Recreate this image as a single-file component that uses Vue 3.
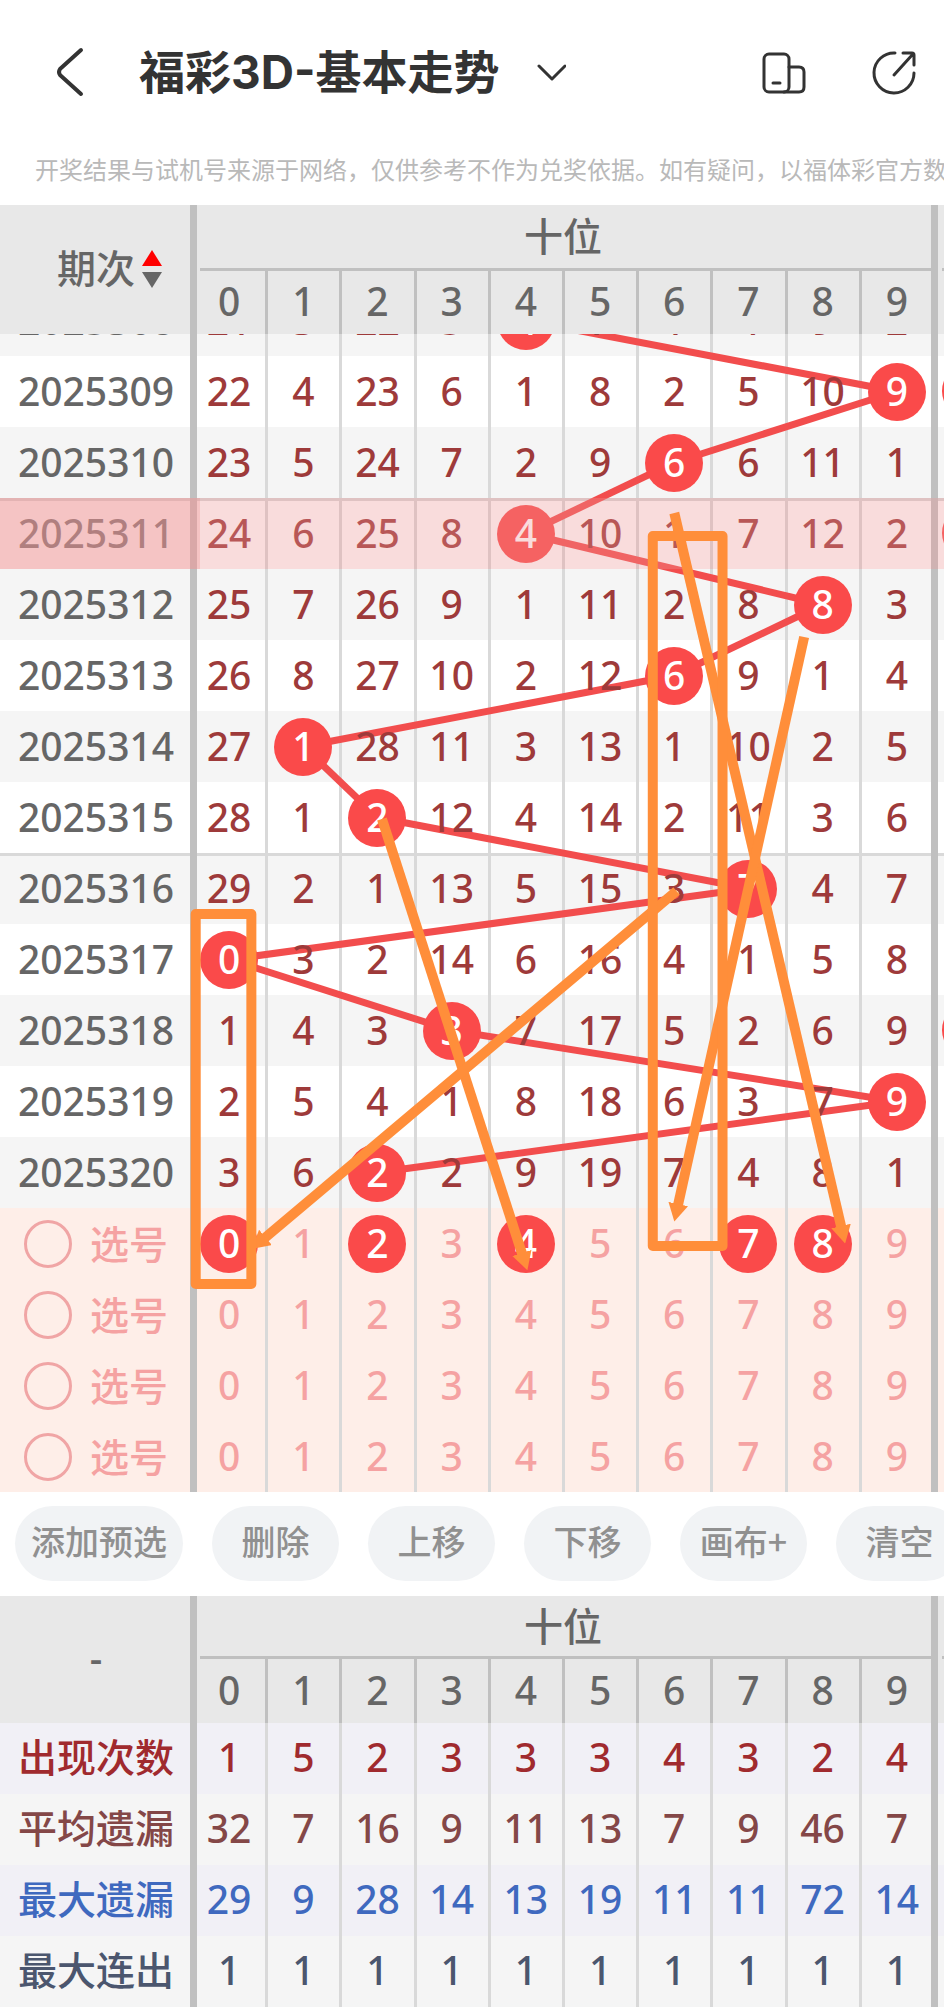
<script setup>
import { ref } from 'vue'

const digits = [0, 1, 2, 3, 4, 5, 6, 7, 8, 9]
const ROW = 71

// hit: drawn digit of the tens place; cells: omission counts per digit
const draws = [
  { id: '2025308', hit: 4, cells: [21, 3, 22, 5, 4, 7, 1, 4, 9, 2] },
  { id: '2025309', hit: 9, cells: [22, 4, 23, 6, 1, 8, 2, 5, 10, 9], next: true },
  { id: '2025310', hit: 6, cells: [23, 5, 24, 7, 2, 9, 6, 6, 11, 1] },
  { id: '2025311', hit: 4, cells: [24, 6, 25, 8, 4, 10, 1, 7, 12, 2], next: true, ruled: true },
  { id: '2025312', hit: 8, cells: [25, 7, 26, 9, 1, 11, 2, 8, 8, 3] },
  { id: '2025313', hit: 6, cells: [26, 8, 27, 10, 2, 12, 6, 9, 1, 4] },
  { id: '2025314', hit: 1, cells: [27, 1, 28, 11, 3, 13, 1, 10, 2, 5] },
  { id: '2025315', hit: 2, cells: [28, 1, 2, 12, 4, 14, 2, 11, 3, 6] },
  { id: '2025316', hit: 7, cells: [29, 2, 1, 13, 5, 15, 3, 7, 4, 7], ruled: true },
  { id: '2025317', hit: 0, cells: [0, 3, 2, 14, 6, 16, 4, 1, 5, 8] },
  { id: '2025318', hit: 3, cells: [1, 4, 3, 3, 7, 17, 5, 2, 6, 9], next: true },
  { id: '2025319', hit: 9, cells: [2, 5, 4, 1, 8, 18, 6, 3, 7, 9] },
  { id: '2025320', hit: 2, cells: [3, 6, 2, 2, 9, 19, 7, 4, 8, 1] }
]
const activeRow = 3

const picks = ref([[0, 2, 4, 7, 8], [], [], []])
const chosen = ref(null)
function toggle(row, d) {
  const list = picks.value[row]
  const at = list.indexOf(d)
  if (at < 0) list.push(d)
  else list.splice(at, 1)
}

const trend = draws.slice(1).map((d, i) => ({
  x1: draws[i].hit * 10 + 5 + '%',
  y1: (i + 0.5) * ROW,
  x2: d.hit * 10 + 5 + '%',
  y2: (i + 1.5) * ROW
}))

const arrows = [
  { x1: '65%', y1: 228, x2: '87.5%', y2: 942 },
  { x1: '82.5%', y1: 352, x2: '65.5%', y2: 920 },
  { x1: '25.6%', y1: 534, x2: '44.5%', y2: 969 },
  { x1: '65.3%', y1: 606, x2: '9.8%', y2: 953 }
]
const frames = [
  { x: '0.5%', y: 629, width: '7.5%', height: 370 },
  { x: '62.1%', y: 251, width: '9.4%', height: 710 }
]

const tools = ['添加预选', '删除', '上移', '下移', '画布+', '清空']

const stats = [
  { name: '出现次数', tone: 'crimson', cells: [1, 5, 2, 3, 3, 3, 4, 3, 2, 4] },
  { name: '平均遗漏', tone: 'brown', cells: [32, 7, 16, 9, 11, 13, 7, 9, 46, 7] },
  { name: '最大遗漏', tone: 'blue', cells: [29, 9, 28, 14, 13, 19, 11, 11, 72, 14] },
  { name: '最大连出', tone: 'slate', cells: [1, 1, 1, 1, 1, 1, 1, 1, 1, 1] }
]
</script>

<template>
  <main class="page">
    <header class="top">
      <button class="icon back" aria-label="返回">
        <svg width="30" height="50" viewBox="0 0 30 50"><path d="M26 3 L5 22 Q3 25 5 28 L26 47" /></svg>
      </button>
      <h1>福彩3D-基本走势</h1>
      <button class="icon more" aria-label="切换走势">
        <svg width="30" height="18" viewBox="0 0 30 18"><path d="M3 3 L16 16 L29 3" /></svg>
      </button>
      <span class="spacer"></span>
      <button class="icon" aria-label="横屏">
        <svg width="46" height="46" viewBox="0 0 46 46">
          <rect x="3" y="5" width="25" height="38" rx="5" />
          <path d="M28 18 H38 Q43 18 43 23 V38 Q43 43 38 43 H23" />
          <path d="M12 34 H19" />
        </svg>
      </button>
      <button class="icon share" aria-label="分享">
        <svg width="46" height="46" viewBox="0 0 46 46">
          <path d="M23 4 A20 20 0 1 0 42 24" />
          <path d="M31 4 H40 Q42 4 42 6 V16 M41 5 L22 26" />
        </svg>
      </button>
    </header>
    <p class="notice">开奖结果与试机号来源于网络，仅供参考不作为兑奖依据。如有疑问，以福体彩官方数</p>

    <table class="grid head">
      <colgroup><col class="c-label" /><col v-for="d in digits" :key="d" /><col class="c-next" /></colgroup>
      <thead>
        <tr class="group">
          <th rowspan="2" scope="col">
            <button class="sort">期次
              <svg width="20" height="40" viewBox="0 0 20 40" aria-hidden="true">
                <path fill="#ff0000" d="M10 1 L20 17 H0 Z" /><path fill="#666666" d="M0 23 H20 L10 39 Z" />
              </svg>
            </button>
          </th>
          <th class="wide" colspan="10" scope="colgroup">十位</th>
          <th class="wide next"></th>
        </tr>
        <tr class="nums">
          <th v-for="d in digits" :key="d" class="cell" scope="col">{{ d }}</th>
          <th class="cell next"></th>
        </tr>
      </thead>
    </table>

    <section class="viewport">
      <div class="sheet">
        <table class="grid">
          <colgroup><col class="c-label" /><col v-for="d in digits" :key="d" /><col class="c-next" /></colgroup>
          <tbody>
            <tr v-for="row in draws" :key="row.id" class="draw" :class="{ ruled: row.ruled }">
              <th scope="row"><span class="num">{{ row.id }}</span></th>
              <td v-for="(n, d) in row.cells" :key="d" class="cell">
                <span class="num" :class="{ ball: d === row.hit }">{{ n }}</span>
              </td>
              <td class="cell next"><span v-if="row.next" class="ball peek"></span></td>
            </tr>
            <tr v-for="(list, r) in picks" :key="r" class="pick">
              <th scope="row">
                <label class="choose"><input v-model="chosen" type="radio" name="pick" :value="r" />选号</label>
              </th>
              <td v-for="d in digits" :key="d" class="cell">
                <button class="num" :class="{ ball: list.includes(d) }" @click="toggle(r, d)">{{ d }}</button>
              </td>
              <td class="cell next"></td>
            </tr>
          </tbody>
        </table>
        <svg class="layer trend" aria-hidden="true">
          <line v-for="(l, i) in trend" :key="i" v-bind="l" />
        </svg>
        <div class="shade" :style="{ top: activeRow * ROW + 'px' }"><i></i></div>
        <svg class="layer marks" aria-hidden="true">
          <defs>
            <marker id="tip" markerUnits="userSpaceOnUse" markerWidth="18" markerHeight="20" refX="1" refY="10" orient="auto">
              <path d="M0 0 L18 10 L0 20 Z" />
            </marker>
          </defs>
          <line v-for="(a, i) in arrows" :key="i" v-bind="a" marker-end="url(#tip)" />
          <rect v-for="(f, i) in frames" :key="i" v-bind="f" />
        </svg>
      </div>
    </section>

    <nav class="tools">
      <button v-for="t in tools" :key="t">{{ t }}</button>
    </nav>

    <table class="grid foot">
      <colgroup><col class="c-label" /><col v-for="d in digits" :key="d" /><col class="c-next" /></colgroup>
      <thead>
        <tr class="group">
          <th rowspan="2" scope="col">-</th>
          <th class="wide" colspan="10" scope="colgroup">十位</th>
          <th class="wide next"></th>
        </tr>
        <tr class="nums">
          <th v-for="d in digits" :key="d" class="cell" scope="col">{{ d }}</th>
          <th class="cell next"></th>
        </tr>
      </thead>
      <tbody>
        <tr v-for="s in stats" :key="s.name" class="stat" :class="s.tone">
          <th scope="row">{{ s.name }}</th>
          <td v-for="(n, d) in s.cells" :key="d" class="cell">{{ n }}</td>
          <td class="cell next"></td>
        </tr>
      </tbody>
    </table>
  </main>
</template>

<style>
body {
  margin: 0;
  background: #ffffff;
}
</style>

<style scoped>
.page {
  display: flex;
  flex-direction: column;
  height: 100vh;
  overflow: hidden;
  background: #ffffff;
  color: #666666;
  font-family: "Noto Sans", "Noto Sans CJK SC", sans-serif;
}
button {
  margin: 0;
  padding: 0;
  border: 0;
  background: none;
  color: inherit;
  font: inherit;
  cursor: pointer;
}
.top {
  display: flex;
  flex: none;
  align-items: center;
  height: 144px;
  padding: 0 26px 0 55px;
  color: #333333;
}
.top h1 {
  margin: 0 37px 0 54px;
  font: 700 46px/64px "Inter", "Noto Sans CJK SC", sans-serif;
  white-space: nowrap;
}
.icon svg {
  display: block;
  fill: none;
  stroke: #333333;
  stroke-width: 3;
  stroke-linecap: round;
  stroke-linejoin: round;
}
.back svg {
  stroke-width: 4;
}
.spacer {
  flex: 1;
}
.share {
  margin-left: 65px;
}
.notice {
  flex: none;
  height: 61px;
  margin: 0;
  padding-left: 35px;
  overflow: hidden;
  color: #b9b9b9;
  font: 24px/50px "Noto Sans CJK SC", sans-serif;
  white-space: nowrap;
}
.grid {
  width: 100%;
  flex: none;
  border-spacing: 0;
  table-layout: fixed;
  font-size: 39px;
  line-height: 60px;
  text-align: center;
}
.c-label {
  width: 192px;
}
.c-next {
  width: 10px;
}
.grid th,
.grid td {
  box-sizing: border-box;
  height: 71px;
  padding: 0 0 3px;
  font-weight: 500;
  white-space: nowrap;
}
.cell,
.wide {
  position: relative;
}
.cell::before,
.wide::before {
  content: "";
  position: absolute;
  top: 0;
  bottom: 0;
  left: -1px;
  width: 3px;
  background: #d9d9d9;
}
thead .cell::before {
  background: #c0c0c0;
}
th + .cell:not(.nums .cell)::before,
.nums .cell:first-child::before,
.next::before,
.wide::before {
  left: -2px;
  width: 7px;
  background: #c0c0c0;
}
.grid .next::before {
  left: -3px;
  background: #c0c0c0;
}
thead {
  background: #e8e8e8;
}
.wide::after {
  content: "";
  position: absolute;
  right: 0;
  bottom: 0;
  left: 8px;
  height: 3px;
  background: #c0c0c0;
}
.grid .wide {
  height: 66px;
  padding-bottom: 5px;
}
.grid .nums .cell {
  height: 63px;
}
.grid.foot .wide {
  height: 63px;
  padding-bottom: 3px;
}
.grid.foot .nums .cell {
  height: 64px;
}
.sort {
  position: relative;
}
.sort svg {
  position: absolute;
  top: 11px;
  left: 100%;
  margin-left: 7px;
}
.viewport {
  display: flex;
  flex: 1;
  flex-direction: column;
  justify-content: flex-end;
  min-height: 0;
  overflow: hidden;
}
.sheet {
  position: relative;
  flex: none;
}
.draw:nth-child(odd) {
  background: #f5f5f5;
}
.ruled > * {
  box-shadow: inset 0 3px #d9d9d9;
}
.draw .cell {
  color: #9e3a3a;
}
.grid .draw > *,
.grid .pick > * {
  padding-bottom: 0;
}
.num {
  position: relative;
  z-index: 2;
  display: block;
  box-sizing: border-box;
  width: 58px;
  height: 58px;
  margin: 0 auto;
  border-radius: 50%;
  line-height: 56px;
}
button.num {
  padding-bottom: 2px;
}
th .num {
  width: auto;
}
.cell .ball {
  background: #fa4a4a;
  color: #ffffff;
}
.peek {
  position: absolute;
  top: 6px;
  left: 8px;
  width: 58px;
  height: 58px;
  border-radius: 50%;
}
.pick {
  background: #feeee8;
  color: #f5a2a2;
}
.choose {
  display: flex;
  align-items: center;
  gap: 18px;
  padding-left: 24px;
  line-height: 56px;
}
.choose input {
  appearance: none;
  box-sizing: border-box;
  width: 48px;
  height: 48px;
  margin: 0;
  border: 3px solid #f0a5a5;
  border-radius: 50%;
}
.choose input:checked {
  background: #fa4a4a;
}
.layer {
  position: absolute;
  top: 0;
  left: 192px;
  width: calc(100% - 202px);
  height: 100%;
  overflow: visible;
  pointer-events: none;
}
.trend {
  z-index: 1;
  stroke: #f24d4d;
  stroke-width: 7;
}
.shade {
  position: absolute;
  z-index: 3;
  right: 0;
  left: 0;
  height: 71px;
  background: rgba(237, 149, 149, 0.33);
  pointer-events: none;
}
.shade i {
  display: block;
  width: 200px;
  height: 100%;
  background: rgba(237, 149, 149, 0.33);
}
.marks {
  z-index: 4;
  fill: none;
  stroke: #ff8e3a;
  stroke-width: 10;
  stroke-linejoin: round;
}
.marks marker path {
  fill: #ff8e3a;
  stroke: none;
}
.tools {
  display: flex;
  flex: none;
  gap: 29px;
  padding: 14px 15px 15px;
  overflow: hidden;
}
.tools button {
  flex: none;
  min-width: 127px;
  height: 75px;
  padding: 0 16px 6px;
  border-radius: 38px;
  background: #f1f3f5;
  color: #909090;
  font: 500 34px/60px "Noto Sans CJK SC", sans-serif;
}
.stat {
  background: #f5f5f5;
}
.stat:nth-child(odd) {
  background: #f1f0f6;
}
.crimson {
  color: #a02a2e;
}
.brown {
  color: #844747;
}
.blue {
  color: #3f69bf;
}
.slate {
  color: #4b566e;
}
</style>
